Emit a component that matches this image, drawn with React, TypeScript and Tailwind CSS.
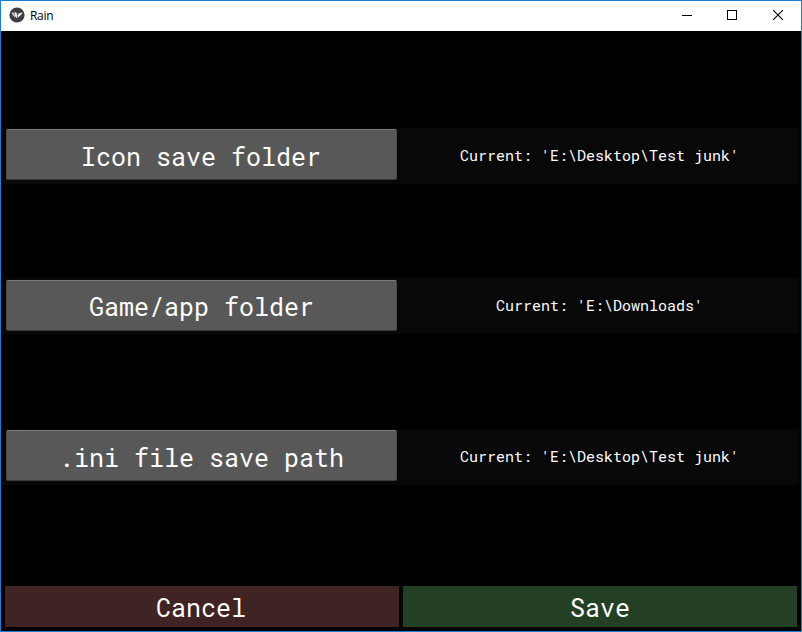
const rows = [
  { label: 'Icon save folder', current: "Current: 'E:\\Desktop\\Test junk'", row: 'mt-[97px]', left: 'pt-px', text: 'pt-[4px] pr-px' },
  { label: 'Game/app folder', current: "Current: 'E:\\Downloads'", row: 'mt-[94px]', left: 'pt-[2px]', text: 'pt-[2px]' },
  { label: '.ini file save path', current: "Current: 'E:\\Desktop\\Test junk'", row: 'mt-[95px]', left: 'pt-px', text: 'pt-[4px]' },
];

const bigText =
  "font-['Roboto_Mono','DejaVu_Sans_Mono',monospace] text-[25px] leading-[30px] text-white whitespace-pre";

function AppIcon() {
  return (
    <svg width="16" height="16" viewBox="0 0 16 16" className="shrink-0">
      <circle cx="8" cy="8" r="7.6" fill="#3c3e42" />
      <path d="M2.4 5.6 L4.6 5.6 L5.8 8.2 L5.8 10.6 L4 8.6 Z" fill="#c8c8c8" />
      <path d="M5.3 5.2 L7.3 5.4 L8.3 8 L7.9 11.2 L6.3 9.6 Z" fill="#f5f5f5" />
      <path d="M8.9 7.8 L10 6.2 L14 5.4 L12 7.8 L8.7 11 Z" fill="#f5f5f5" />
    </svg>
  );
}

function TitleBar() {
  return (
    <header className="flex h-[30px] shrink-0 bg-white pl-2">
      <div className="flex items-center pb-[2px]">
        <AppIcon />
        <span className="ml-[5px] pt-[2px] font-['Open_Sans',sans-serif] text-[12px] leading-4 tracking-[-0.3px] text-black">
          Rain
        </span>
      </div>
      <div className="ml-auto flex h-full">
        <button className="flex w-[46px] items-center justify-center" aria-label="Minimize">
          <svg width="10" height="10" viewBox="0 0 10 10" shapeRendering="crispEdges">
            <rect x="0" y="4" width="10" height="1" fill="#000" />
          </svg>
        </button>
        <button className="flex w-[45px] items-center justify-center pr-px pb-[2px]" aria-label="Maximize">
          <svg width="10" height="10" viewBox="0 0 10 10" shapeRendering="crispEdges">
            <rect x="0.5" y="0.5" width="9" height="9" fill="none" stroke="#000" />
          </svg>
        </button>
        <button className="flex w-[46px] items-center justify-center pb-[2px]" aria-label="Close">
          <svg width="10" height="10" viewBox="0 0 10 10">
            <path d="M0 0 L10 10 M10 0 L0 10" stroke="#000" strokeWidth="1.1" />
          </svg>
        </button>
      </div>
    </header>
  );
}

export default function App() {
  return (
    <div className="flex h-[632px] w-[802px] flex-col overflow-hidden border border-[#1c7fd6] bg-black">
      <TitleBar />
      <main className="flex flex-1 flex-col">
        {rows.map((row) => (
          <div key={row.label} className={`mx-[2px] flex h-[56px] bg-[#080808] ${row.row}`}>
            <div className={`w-[397px] px-[3px] ${row.left}`}>
              <button
                className={`flex h-[51px] w-[391px] items-center justify-center rounded-[2px] border border-t-[#7b7b7b] border-r-[#4a4a4a] border-b-[#3a3a3a] border-l-[#4a4a4a] bg-[#585858] ${row.text} ${bigText}`}
              >
                {row.label}
              </button>
            </div>
            <div className="flex flex-1 items-center justify-center pb-[2px] font-['Roboto_Mono','DejaVu_Sans_Mono',monospace] text-[15px] whitespace-pre text-white">
              {row.current}
            </div>
          </div>
        ))}
        <footer className="mt-auto mb-1 ml-1 flex gap-1">
          <button className={`flex h-[41px] w-[394px] items-center justify-center bg-[#402424] pt-[3px] pr-[2px] ${bigText}`}>
            Cancel
          </button>
          <button className={`flex h-[41px] w-[394px] items-center justify-center bg-[#244024] pt-[3px] ${bigText}`}>
            Save
          </button>
        </footer>
      </main>
    </div>
  );
}
